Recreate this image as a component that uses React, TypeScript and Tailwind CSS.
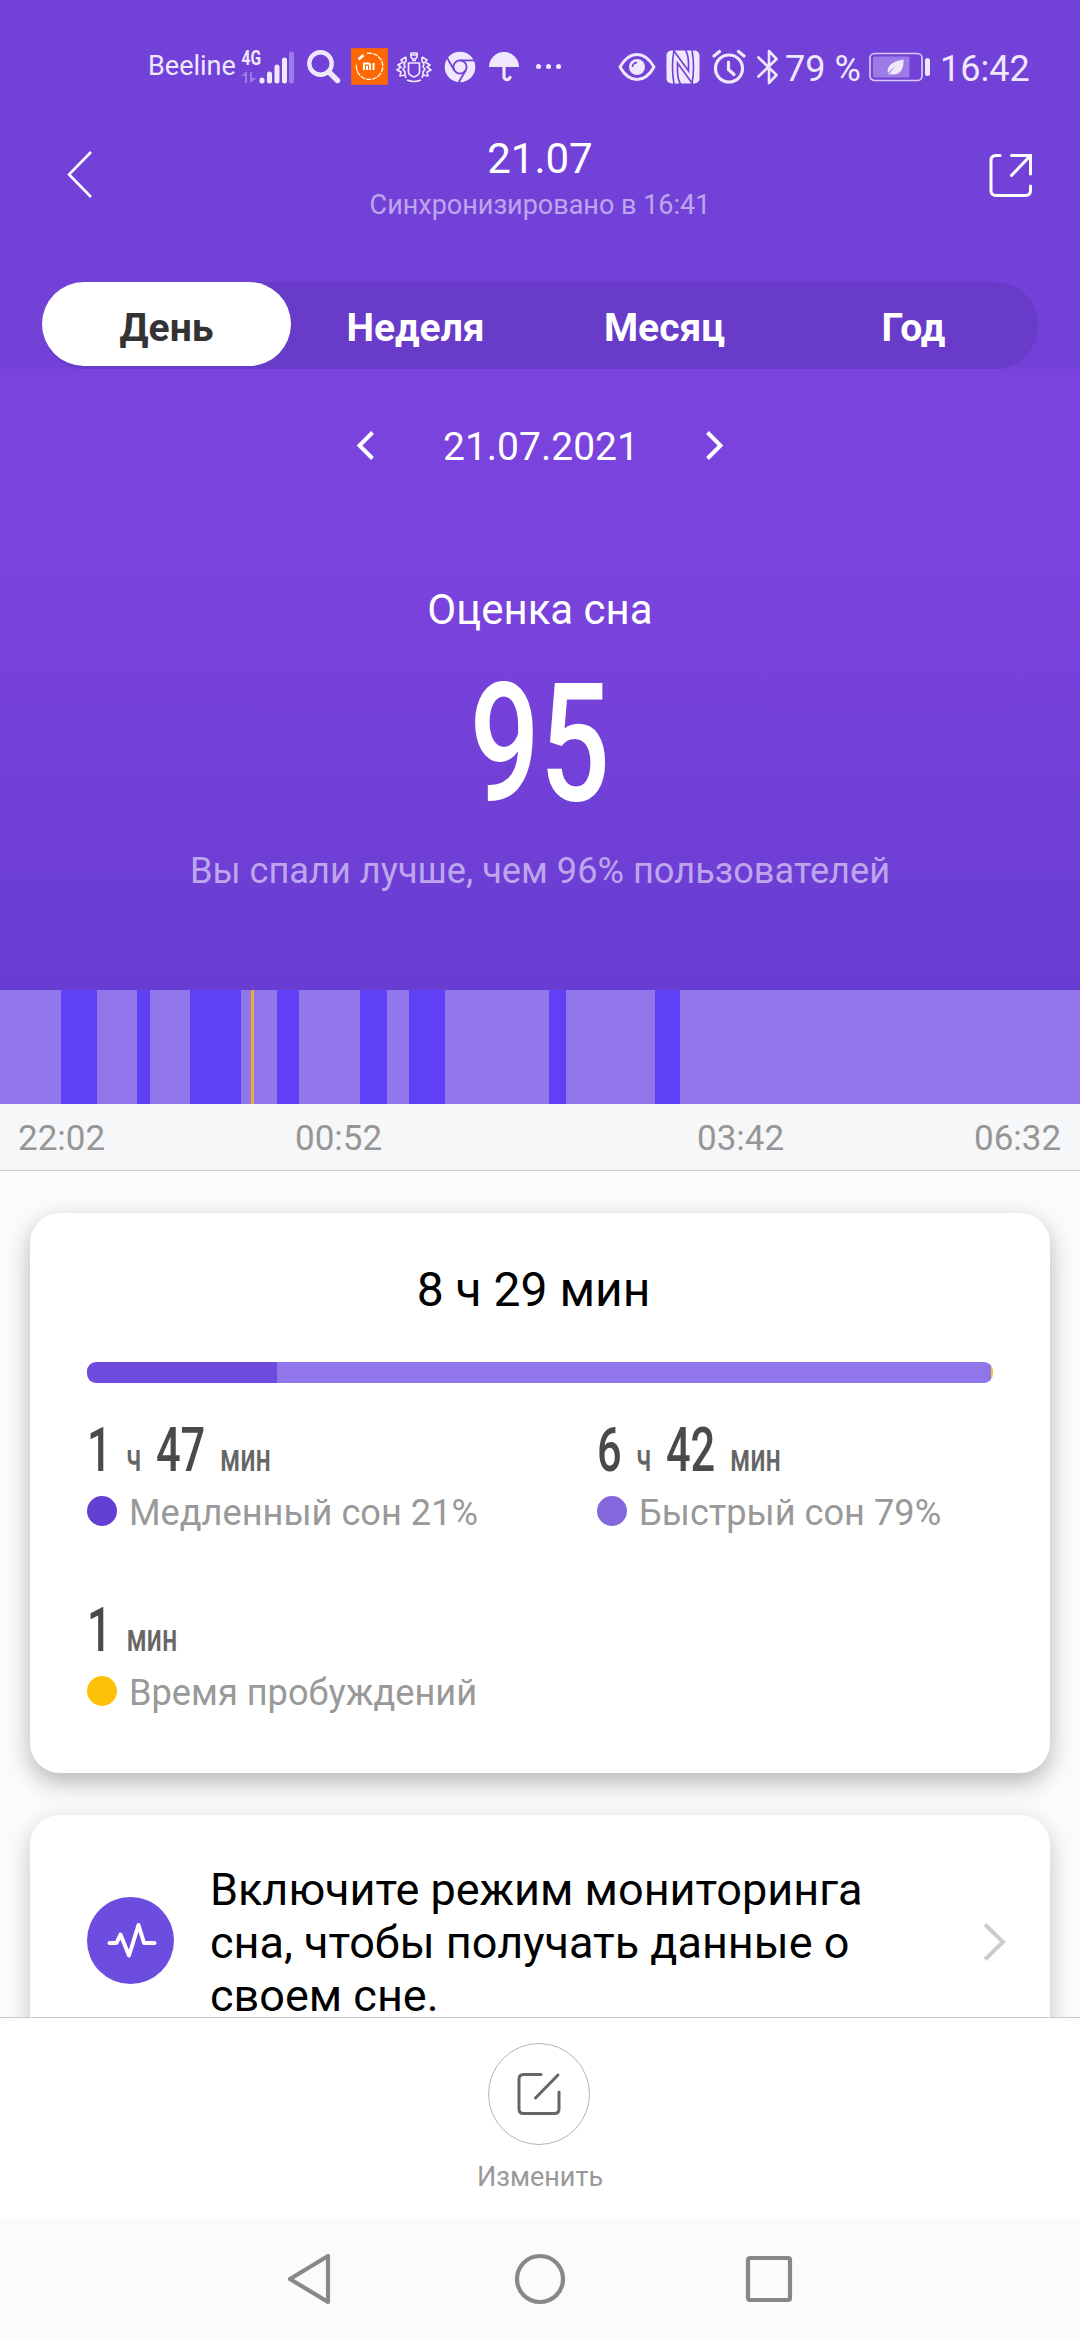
import clsx from 'clsx';

const PHASES = [
  { w: 61, kind: 'light' },
  { w: 36, kind: 'deep' },
  { w: 40, kind: 'light' },
  { w: 13, kind: 'deep' },
  { w: 40, kind: 'light' },
  { w: 51, kind: 'deep' },
  { w: 10, kind: 'light' },
  { w: 3, kind: 'awake' },
  { w: 23, kind: 'light' },
  { w: 22, kind: 'deep' },
  { w: 61, kind: 'light' },
  { w: 27, kind: 'deep' },
  { w: 22, kind: 'light' },
  { w: 36, kind: 'deep' },
  { w: 104, kind: 'light' },
  { w: 17, kind: 'deep' },
  { w: 89, kind: 'light' },
  { w: 25, kind: 'deep' },
  { w: 400, kind: 'light' },
];

const TABS = ['День', 'Неделя', 'Месяц', 'Год'];

function NotificationIcons() {
  return (
    <div className="flex items-center">
      {/* Network type, data arrows, signal */}
      <svg width="54" height="44" viewBox="0 -8 54 44" className="-mt-[8px] ml-[5px]">
        <g transform="translate(.5 16) scale(.74 1)">
          <text x="0" y="0" fontSize="21" fontWeight="700" fontFamily="Roboto, sans-serif" fill="#efe8fc">4G</text>
        </g>
        <path d="M0 27 6 22v12H4v-7zM9 23h2v6h5l-7 5z" fill="#9c7be6" />
        <g stroke="#efe8fc" strokeWidth="5" strokeLinecap="round">
          <path d="M21 31v1M28.500 25v7M36 18v14M43.500 11v21" />
          <path d="M50.500 5v27" stroke="#9c7be6" />
        </g>
      </svg>
      {/* Search */}
      <svg width="34" height="34" viewBox="0 0 34 34" fill="none" stroke="#efe8fc" className="ml-[12px]">
        <circle cx="13.500" cy="13.500" r="11.200" strokeWidth="4.400" />
        <path d="m22 22 8.500 8.500" strokeWidth="5.400" strokeLinecap="round" />
      </svg>
      {/* Mi */}
      <svg width="37" height="37" viewBox="0 0 37 37" className="ml-[10px]">
        <path d="M0 0h37v37H0z" fill="#e5602f" />
        <path d="M1 1h35v35H1z" fill="#ff6700" />
        <path d="M16 5.300A13.200 13.200 0 1 1 5.500 16" fill="none" stroke="#fff" strokeWidth="1.300" strokeDasharray="5 1" />
        <path d="m7.500 11.500 5-4.500" stroke="#fff" strokeWidth="3" />
        <path d="M13 22v-6.500h4.500q1.500 0 1.500 1.500v5M16 18v4M22.500 15v7" fill="none" stroke="#fff" strokeWidth="2" />
      </svg>
      {/* Crest */}
      <svg width="36" height="32" viewBox="0 0 36 32" fill="none" stroke="#efe8fc" strokeWidth="1.700" className="ml-[8px]" strokeLinejoin="round">
        <path d="M15 2h6v4l-1.500 2h-3L15 6zM14 4h8M12.500 12h11v9q0 3-5.500 5-5.500-2-5.500-5z" />
        <path d="M16 9.500h4M11 29q7 3 14 0" />
        <path d="M10 6 5 9l2 2-5 3 3 2-4 3 4 2-1 4 5-1 1 3M10 6v4l-2 3 1 3-2 2 2 3v3" />
        <path d="m26 6 5 3-2 2 5 3-3 2 4 3-4 2 1 4-5-1-1 3M26 6v4l2 3-1 3 2 2-2 3v3" />
      </svg>
      {/* Chrome */}
      <svg width="32" height="32" viewBox="0 0 32 32" className="ml-[12px]">
        <circle cx="16" cy="16" r="15.300" fill="#efe8fc" />
        <circle cx="16" cy="16" r="6.600" fill="none" stroke="#7241d8" strokeWidth="1.800" />
        <g stroke="#7241d8" strokeWidth="1.800">
          <path d="M16 9.400h15" />
          <path d="M16 9.400h15" transform="rotate(120 16 16)" />
          <path d="M16 9.400h15" transform="rotate(240 16 16)" />
        </g>
      </svg>
      {/* Umbrella */}
      <svg width="32" height="32" viewBox="0 0 32 32" className="ml-[12px]">
        <path d="M1 16A15 15 0 0 1 31 16z" fill="#efe8fc" />
        <path d="M16 15v11.500a3.200 3.200 0 0 0 6 0" fill="none" stroke="#efe8fc" strokeWidth="3.200" strokeLinecap="round" />
      </svg>
      {/* More */}
      <div className="ml-[16px] flex gap-[5px]">
        <i className="size-[5px] rounded-full bg-[#efe8fc]" />
        <i className="size-[5px] rounded-full bg-[#efe8fc]" />
        <i className="size-[5px] rounded-full bg-[#efe8fc]" />
      </div>
    </div>
  );
}

function StatusBar() {
  return (
    <div className="flex h-[133px] items-center pl-[148px] text-[#efe8fc]">
      <span className="w-[88px] text-[27px] leading-none whitespace-nowrap">Beeline</span>
      <NotificationIcons />

      <div className="ml-[57px] flex items-center">
        {/* Eye */}
        <svg width="38" height="30" viewBox="0 0 38 30">
          <path d="M2 15Q9 2.500 19 2.500T36 15Q29 27.500 19 27.500T2 15z" fill="none" stroke="#efe8fc" strokeWidth="3" strokeLinejoin="round" />
          <circle cx="19" cy="15" r="8" fill="#efe8fc" />
          <path d="M14.500 15a4.500 4.500 0 0 1 4.500-4.500" fill="none" stroke="#7241d8" strokeWidth="1.800" />
        </svg>
        {/* NFC */}
        <svg width="34" height="34" viewBox="0 0 34 34" className="ml-[10px]">
          <rect x=".5" y=".5" width="33" height="33" rx="5" fill="#efe8fc" />
          <path d="M8 0 Q5 17 8 34M26 0Q29 17 26 34" fill="none" stroke="#7241d8" strokeWidth="1.600" />
          <path d="M8 1 22.500 21V12Q22 4 19.500 0M26 33 11.500 13v9q.5 8 3 12" fill="none" stroke="#7241d8" strokeWidth="1.700" />
        </svg>
        {/* Alarm */}
        <svg width="34" height="35" viewBox="0 0 34 35" fill="none" stroke="#efe8fc" strokeLinecap="round" className="ml-[12px]">
          <circle cx="17" cy="19.500" r="13.500" strokeWidth="3.200" />
          <path d="M2 7 7.500 2.500M32 7l-5.500-4.500" strokeWidth="3.200" />
          <path d="M16.500 13v7.500l5.500 5" strokeWidth="3.200" />
        </svg>
        {/* Bluetooth */}
        <svg width="22" height="36" viewBox="0 0 22 36" fill="none" stroke="#efe8fc" strokeWidth="2.600" strokeLinejoin="round" strokeLinecap="round" className="ml-[11px]">
          <path d="m1.500 8.500 18 17.500-7.500 8V2l7.500 8-18 17.500" />
        </svg>
        <span className="ml-[6px] w-[77px] pt-[4px] text-[36px] leading-none whitespace-nowrap">79 %</span>
        {/* Battery */}
        <svg width="62" height="30" viewBox="0 0 62 30" className="ml-[7px]">
          <rect x="1" y="1.500" width="52" height="27" rx="4.500" fill="none" stroke="#d9c9f6" strokeWidth="1.700" />
          <rect x="4" y="4.500" width="36.500" height="21" rx="1.500" fill="#9c7be6" />
          <path d="M19.500 24c1-3 3-6 7-9-4 2-6.500 4-7.500 7-1.500-7 2-12 15.500-14.500.500 10-4 17-13 14.500z" fill="#efe8fc" />
          <rect x="56" y="6" width="5" height="18" rx="2.500" fill="#efe8fc" />
        </svg>
        <span className="ml-[9px] pt-[4px] text-[36px] leading-none whitespace-nowrap">16:42</span>
      </div>
    </div>
  );
}

function Header() {
  return (
    <header className="flex h-[149px] justify-between px-[48px]">
      <svg width="60" height="60" viewBox="0 0 60 60" fill="none" stroke="#fff" strokeWidth="2.600" className="mt-[11px]">
        <path d="M43 8 21 30.500 43 53" />
      </svg>
      <div className="flex flex-col items-center">
        <h1 className="text-[42px] leading-[52px] text-white">21.07</h1>
        <p className="mt-[3px] text-[27px] leading-[34px] text-[#bfa5ee]">Синхронизировано в 16:41</p>
      </div>
      <svg width="60" height="60" viewBox="0 0 60 60" fill="none" stroke="#fff" strokeWidth="3" strokeLinecap="round" className="mt-[11px]">
        <path d="M28 11.500H24q-5 0-5 5v30q0 5 5 5h29.500q5 0 5-5V42" />
        <path d="M39.500 11.500h19V30M58 12 39.500 31.500" />
      </svg>
    </header>
  );
}

function Tabs() {
  return (
    <nav className="mx-[42px] flex h-[87px] rounded-[43px] bg-[#683bc9]">
      {TABS.map((label, i) => (
        <button
          key={label}
          className={clsx(
            'h-[84px] w-[249px] rounded-[42px] pt-[7px] text-[39px] leading-[52px] font-bold',
            i === 0 ? 'bg-white text-[#333]' : 'text-white',
          )}
        >
          {label}
        </button>
      ))}
    </nav>
  );
}

function Score() {
  return (
    <section className="flex h-[621px] shrink-0 flex-col items-center bg-linear-to-b from-[#7b43dd] from-30% to-[#693dd2] pt-[48px] text-white">
      <div className="flex h-[60px] items-center">
        <svg width="20" height="32" viewBox="0 0 20 32" fill="none" stroke="#fff" strokeWidth="4">
          <path d="M16.500 1.500 3.500 14.500l13 13" />
        </svg>
        <span className="mx-[67px] w-[194px] text-center text-[39px] leading-[60px] whitespace-nowrap">21.07.2021</span>
        <svg width="20" height="32" viewBox="0 0 20 32" fill="none" stroke="#fff" strokeWidth="4">
          <path d="m3.500 1.500 13 13-13 13" />
        </svg>
      </div>
      <h2 className="mt-[103px] text-[42px] leading-[60px]">Оценка сна</h2>
      <div className="mt-[24px] h-[160px] scale-x-[.75] text-[165px] leading-[160px] font-medium">95</div>
      <p className="mt-[22px] text-[36.200px] leading-[50px] whitespace-nowrap text-[#bda6ec]">Вы спали лучше, чем 96% пользователей</p>
    </section>
  );
}

function Timeline() {
  return (
    <section className="shrink-0">
      <div className="flex h-[114px]">
        {PHASES.map((p, i) => (
          <div
            key={i}
            style={{ width: p.w }}
            className={clsx(
              'shrink-0',
              p.kind === 'light' && 'bg-[#9175ea]',
              p.kind === 'deep' && 'bg-[#5f40f6]',
              p.kind === 'awake' && 'bg-[#e8ae3c]',
            )}
          />
        ))}
      </div>
      <div className="flex h-[67px] border-b border-[#c8c8c8] bg-[#f6f7f9] pl-[18px] text-[35px] leading-[69px] text-[#969696]">
        <span className="w-[277px]">22:02</span>
        <span className="w-[402px]">00:52</span>
        <span className="w-[277px]">03:42</span>
        <span>06:32</span>
      </div>
    </section>
  );
}

type StatProps = { hours?: number; minutes: number; label: string; dot: string };

function Stat({ hours, minutes, label, dot }: StatProps) {
  return (
    <div className="h-[180px] w-[510px]">
      <div className="flex h-[66px] origin-left scale-x-[.7] items-baseline leading-[67px] whitespace-nowrap text-[#4a4a4a]">
        {hours !== undefined && (
          <>
            <span className="text-[62px] font-medium">{hours}</span>
            <span className="mx-[21px] text-[38.500px] font-medium text-[#666]">ч</span>
          </>
        )}
        <span className="text-[62px] font-medium">{minutes}</span>
        <span className="ml-[21px] text-[38.500px] font-medium text-[#666]">мин</span>
      </div>
      <div className="mt-[4px] flex items-center">
        <span className={clsx('size-[30px] rounded-full', dot)} />
        <span className="ml-[12px] pt-[5px] text-[36.200px] leading-[44px] whitespace-nowrap text-[#999]">{label}</span>
      </div>
    </div>
  );
}

function SleepCard() {
  return (
    <section className="mx-[30px] mt-[42px] h-[560px] shrink-0 rounded-[30px] bg-white px-[57px] pt-[46px] shadow-[0_9px_24px_rgba(0,0,0,.28)]">
      <h3 className="pr-[13px] text-center text-[48px] leading-[62px] text-black">8 ч 29 мин</h3>
      <div className="mt-[41px] flex h-[21px] overflow-hidden rounded-[9px]">
        <div className="w-[190px] bg-[#6c4bde]" />
        <div className="flex-1 bg-[#9175ea]" />
        <div className="w-[2px] bg-[#f0c23a]" />
      </div>
      <div className="mt-[33px] flex flex-wrap">
        <Stat hours={1} minutes={47} label="Медленный сон 21%" dot="bg-[#643fd3]" />
        <div className="-mr-[120px]">
          <Stat hours={6} minutes={42} label="Быстрый сон 79%" dot="bg-[#8467dd]" />
        </div>
        <Stat minutes={1} label="Время пробуждений" dot="bg-[#ffc107]" />
      </div>
    </section>
  );
}

function MonitoringCard() {
  return (
    <section className="mx-[30px] mt-[42px] flex h-[260px] shrink-0 rounded-[30px] bg-white pl-[57px] shadow-[0_9px_24px_rgba(0,0,0,.22)]">
      <svg width="87" height="87" viewBox="0 0 87 87" fill="none" className="mt-[82px]">
        <circle cx="43.500" cy="43.500" r="43.500" fill="#6d4ce0" />
        <path d="M22.500 46h7L33.500 37.500 42 58.500 51.500 28 57 46h10.500" stroke="#fff" strokeWidth="4" strokeLinecap="round" strokeLinejoin="round" />
      </svg>
      <p className="mt-[48px] ml-[36px] w-[700px] text-[45px] leading-[53px] text-black">
        Включите режим мониторинга
        <br />
        сна, чтобы получать данные о
        <br />
        своем сне.
      </p>
      <svg width="30" height="44" viewBox="0 0 30 44" fill="none" stroke="#ccc" strokeWidth="4" className="mt-[105px] ml-[72px]">
        <path d="m3 4.500 18 17.500L3 39.500" />
      </svg>
    </section>
  );
}

function BottomBar() {
  return (
    <footer className="flex h-[201px] flex-col items-center border-t border-[#c8c8c8] bg-white pt-[25px]">
      <button className="mr-[2px] flex size-[102px] items-center justify-center rounded-full border border-[#b4b4b4]">
        <svg width="46" height="46" viewBox="0 0 46 46" fill="none" stroke="#666" strokeWidth="3" strokeLinecap="round">
          <path d="M25 3.500H7.500q-4.500 0-4.500 4.500v30q0 4.500 4.500 4.500h31q4.500 0 4.500-4.500V21" />
          <path d="M42 4 19.500 27" />
        </svg>
      </button>
      <span className="mt-[14px] text-[27px] leading-[36px] text-[#999]">Изменить</span>
    </footer>
  );
}

function SystemNav() {
  return (
    <div className="flex h-[122px] items-center justify-center gap-[176px] bg-[#fbfbfb]">
      <svg width="54" height="54" viewBox="0 0 54 54" fill="none" stroke="#888" strokeWidth="4.200" strokeLinejoin="round">
        <path d="M45 4v46L7 27z" />
      </svg>
      <svg width="54" height="54" viewBox="0 0 54 54" fill="none" stroke="#888" strokeWidth="4.200">
        <circle cx="27" cy="27" r="23" />
      </svg>
      <svg width="54" height="54" viewBox="0 0 54 54" fill="none" stroke="#888" strokeWidth="4.200">
        <rect x="5" y="6" width="42" height="42" rx="2" />
      </svg>
    </div>
  );
}

export default function App() {
  return (
    <div className="flex h-[2340px] w-[1080px] flex-col overflow-hidden bg-[#fbfbfb] font-['Roboto',sans-serif]">
      <div className="flex h-[2017px] shrink-0 flex-col overflow-hidden">
        <div className="shrink-0 bg-[#7241d8]">
          <StatusBar />
          <Header />
          <Tabs />
        </div>
        <Score />
        <Timeline />
        <SleepCard />
        <MonitoringCard />
      </div>
      <BottomBar />
      <SystemNav />
    </div>
  );
}
